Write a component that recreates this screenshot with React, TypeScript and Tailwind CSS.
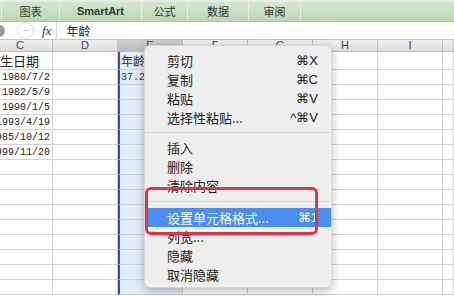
import React from "react";

const cols = [
  { key: "C", w: "w-[65px] -ml-[12px]" },
  { key: "D", w: "w-[65px]" },
  { key: "E", w: "w-[65px]" },
  { key: "F", w: "w-[65px]" },
  { key: "G", w: "w-[65px]" },
  { key: "H", w: "w-[65px]" },
  { key: "I", w: "w-[65px]" },
  { key: "J", w: "w-[11px]" },
];

const dates = ["1980/7/2", "1982/5/9", "1990/1/5", "1993/4/19", "1985/10/12", "1999/11/20"];

type Item = { label: string; key?: string; active?: boolean } | "sep";

const menu: Item[] = [
  { label: "剪切", key: "⌘X" },
  { label: "复制", key: "⌘C" },
  { label: "粘贴", key: "⌘V" },
  { label: "选择性粘贴...", key: "^⌘V" },
  "sep",
  { label: "插入" },
  { label: "删除" },
  { label: "清除内容" },
  "sep",
  { label: "设置单元格格式...", key: "⌘1", active: true },
  { label: "列宽..." },
  { label: "隐藏" },
  { label: "取消隐藏" },
];

function Row({ idx }: { idx: number }) {
  const first = idx === 0;
  const h = first ? "h-[18px]" : "h-[15px]";
  let cText = "";
  let eText = "";
  if (first) {
    cText = "出生日期";
    eText = "年龄";
  } else if (idx <= dates.length) {
    cText = dates[idx - 1];
    if (idx === 1) eText = "37.2";
  }
  return (
    <div className={`flex ${h}`}>
      {cols.map((c) => {
        const isE = c.key === "E";
        const isC = c.key === "C";
        return (
          <div
            key={c.key}
            className={`${c.w} shrink-0 border-b border-[#d2d2d2] ${
              isE ? "bg-[#e4edf9] border-l-2 border-l-[#3b4ba6] border-r border-r-[#d2d2d2]" : "border-r border-r-[#d2d2d2]"
            } overflow-hidden flex items-center ${isC ? (first ? "justify-start" : "justify-end pr-[2px]") : "pl-[1px]"}`}
          >
            {isC && cText && (
              <span
                className={`whitespace-nowrap text-[#222] ${
                  first ? "-ml-[1px] text-[13px] font-['Noto_Sans_CJK_SC',sans-serif]" : "text-[10px] font-['Liberation_Mono',monospace]"
                }`}
              >
                {cText}
              </span>
            )}
            {isE && eText && (
              <span
                className={`whitespace-nowrap text-[#333] ${
                  first ? "text-[12px] font-['Noto_Sans_CJK_SC',sans-serif]" : "text-[10px] font-['Liberation_Mono',monospace]"
                }`}
              >
                {eText}
              </span>
            )}
          </div>
        );
      })}
    </div>
  );
}

export default function App() {
  return (
    <div className="relative w-[454px] h-[296px] overflow-hidden bg-white font-['Liberation_Sans','Noto_Sans_CJK_SC',sans-serif]">
      {/* ribbon tabs */}
      <div className="h-[22px] flex border-t-2 border-t-[#e9ece8] bg-gradient-to-b from-[#d6e6d1] to-[#bcd5b5] border-b border-b-[#a9c2a2] text-[11px] text-[#2f3a2d]">
        <div className="w-[2px] border-r border-[#e6efe3]" />
        <div className="w-[58px] flex items-center justify-center border-r border-[#e6efe3] font-['Noto_Sans_CJK_SC',sans-serif]">图表</div>
        <div className="w-[82px] flex items-center justify-center border-r border-[#e6efe3] font-bold">SmartArt</div>
        <div className="w-[46px] flex items-center justify-center border-r border-[#e6efe3] font-['Noto_Sans_CJK_SC',sans-serif]">公式</div>
        <div className="w-[61px] flex items-center justify-center border-r border-[#e6efe3] font-['Noto_Sans_CJK_SC',sans-serif]">数据</div>
        <div className="w-[52px] flex items-center justify-center border-r border-[#e6efe3] font-['Noto_Sans_CJK_SC',sans-serif]">审阅</div>
        <div className="flex-1" />
      </div>

      {/* formula bar */}
      <div className="h-[18px] flex items-center bg-white border-b border-[#c4c4c4]">
        <div className="w-[12px] h-[12px] rounded-full bg-[#9a9a9a] -ml-[7px] shrink-0" />
        <div className="ml-[12px] w-[17px] h-[17px] rounded-full border border-[#d8d8d8] flex items-center justify-center shrink-0">
          <div className="w-[5px] h-[1px] bg-[#c8c8c8]" />
        </div>
        <span className="ml-[8px] text-[13px] italic font-['Liberation_Serif',serif] text-[#333]">fx</span>
        <div className="ml-[5px] w-px h-[18px] bg-[#d8d8d8]" />
        <span className="ml-[9px] text-[12px] font-['Noto_Sans_CJK_SC',sans-serif] text-[#222]">年龄</span>
      </div>

      {/* column headers */}
      <div className="flex h-[12px] bg-gradient-to-b from-[#f0f0f0] to-[#dedede] border-b border-[#bdbdbd]">
        {cols.map((c) => (
          <div
            key={c.key}
            className={`${c.w} shrink-0 border-r border-[#bfbfbf] flex items-center justify-center text-[11px] leading-none text-[#444] ${
              c.key === "E" ? "bg-gradient-to-b from-[#cfcfcf] to-[#bcbcbc]" : ""
            }`}
          >
            {c.key === "J" ? "" : c.key}
          </div>
        ))}
      </div>

      {/* rows */}
      {Array.from({ length: 16 }).map((_, i) => (
        <Row key={i} idx={i} />
      ))}

      {/* context menu */}
      <div className="absolute left-[144px] top-[45px] w-[188px] rounded-[6px] bg-[#efefef] shadow-[0_3px_10px_rgba(0,0,0,0.28)] border border-[#d6d6d6] pt-[5px] pb-[3px] font-['Noto_Sans_CJK_SC',sans-serif] text-[13px] text-[#222]">
        {menu.map((m, i) =>
          m === "sep" ? (
            <div key={i} className={`${i === 4 ? "h-[11px]" : "h-[13px]"} flex items-center`}>
              <div className="w-full h-px bg-[#d9d9d9]" />
            </div>
          ) : (
            <div
              key={i}
              className={`h-[19px] flex items-center justify-between pl-[22px] pr-[13px] ${
                m.active ? "bg-[#4a8ff0] text-white" : ""
              }`}
            >
              <span className="leading-none">{m.label}</span>
              {m.key && <span className="font-['Liberation_Sans',sans-serif] text-[13px] leading-none">{m.key}</span>}
            </div>
          )
        )}
      </div>

      {/* red highlight box */}
      <div className="absolute left-[145px] top-[187px] w-[173px] h-[48px] rounded-[6px] border-[3px] border-[#e23446]" />
    </div>
  );
}
